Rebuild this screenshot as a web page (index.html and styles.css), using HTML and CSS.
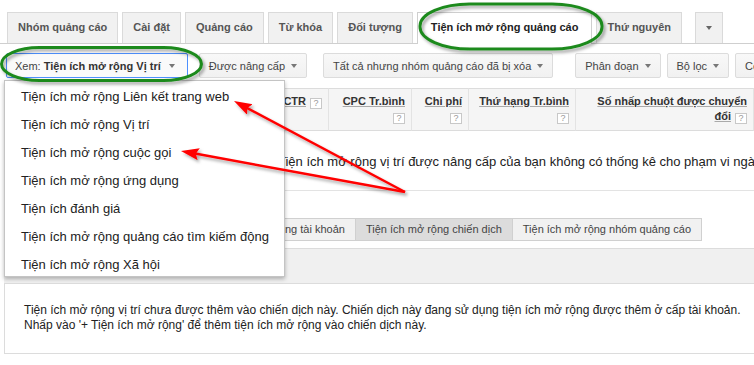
FILE: index.html
```html
<!DOCTYPE html>
<html lang="vi">
<head>
<meta charset="utf-8">
<title>Tiện ích mở rộng quảng cáo</title>
<link rel="stylesheet" href="styles.css">
</head>
<body>
<div class="page">
  <div class="tabs">
    <div class="tab">Nhóm quảng cáo</div>
    <div class="tab">Cài đặt</div>
    <div class="tab">Quảng cáo</div>
    <div class="tab">Từ khóa</div>
    <div class="tab">Đối tượng</div>
    <div class="tab active">Tiện ích mở rộng quảng cáo</div>
    <div class="tab">Thứ nguyên</div>
    <div class="tab more"><span class="caret"></span></div>
  </div>

  <div class="toolbar">
    <div class="btn focus">Xem:&nbsp;<b>Tiện ích mở rộng Vị trí</b><span class="caret"></span></div>
    <div class="btn gap">Được nâng cấp<span class="caret"></span></div>
    <div class="sep"></div>
    <div class="btn">Tất cả nhưng nhóm quảng cáo đã bị xóa<span class="caret"></span></div>
    <div class="sep"></div>
    <div class="btn">Phân đoạn<span class="caret"></span></div>
    <div class="btn">Bộ lọc<span class="caret"></span></div>
    <div class="btn">Cột<span class="caret"></span></div>
  </div>

  <div class="grid">
    <div class="th left"><span class="lbl">Tiện ích mở rộng</span></div>
    <div class="th"><span class="lbl">Nhấp chuột</span></div>
    <div class="th"><span class="lbl">Hiển thị</span></div>
    <div class="th"><div class="ln"><span class="lbl">CTR</span><span class="q">?</span></div></div>
    <div class="th"><div class="ln"><span class="lbl">CPC Tr.bình</span></div><div class="ln"><span class="q">?</span></div></div>
    <div class="th"><div class="ln"><span class="lbl">Chi phí</span></div><div class="ln"><span class="q">?</span></div></div>
    <div class="th"><div class="ln"><span class="lbl">Thứ hạng Tr.bình</span></div><div class="ln"><span class="q">?</span></div></div>
    <div class="th"><div class="ln"><span class="lbl">Số nhấp chuột được chuyển</span></div><div class="ln"><span class="lbl">đổi</span><span class="q">?</span></div></div>
    <div class="msg">Tiện ích mở rộng vị trí được nâng cấp của bạn không có thống kê cho phạm vi ngày này.</div>
  </div>

  <div class="subtabs">
    <div class="st">Tiện ích mở rộng tài khoản</div>
    <div class="st sel">Tiện ích mở rộng chiến dịch</div>
    <div class="st">Tiện ích mở rộng nhóm quảng cáo</div>
  </div>

  <div class="band"></div>

  <div class="notice">
    <p>Tiện ích mở rộng vị trí chưa được thêm vào chiến dịch này. Chiến dịch này đang sử dụng tiện ích mở rộng được thêm ở cấp tài khoản.</p>
    <p>Nhấp vào '+ Tiện ích mở rộng' để thêm tiện ích mở rộng vào chiến dịch này.</p>
  </div>

  <div class="menu">
    <div class="item">Tiện ích mở rộng Liên kết trang web</div>
    <div class="item">Tiện ích mở rộng Vị trí</div>
    <div class="item">Tiện ích mở rộng cuộc gọi</div>
    <div class="item">Tiện ích mở rộng ứng dụng</div>
    <div class="item">Tiện ích đánh giá</div>
    <div class="item">Tiện ích mở rộng quảng cáo tìm kiếm động</div>
    <div class="item">Tiện ích mở rộng Xã hội</div>
  </div>

  <svg class="annot" width="754" height="365" viewBox="0 0 754 365">
    <defs>
      <filter id="sh" x="-5%" y="-5%" width="115%" height="125%">
        <feDropShadow dx="2" dy="2.5" stdDeviation="1.5" flood-color="#000" flood-opacity="0.35"/>
      </filter>
      <marker id="ah" markerUnits="userSpaceOnUse" markerWidth="20" markerHeight="14" refX="12" refY="6" orient="auto">
        <path d="M0,0 L18,6 L0,12 L3,6 z" fill="#f00"/>
      </marker>
    </defs>
    <g filter="url(#sh)">
      <rect x="420" y="4" width="182" height="45" rx="50" ry="22" fill="none" stroke="#1f8a1f" stroke-width="3"/>
      <rect x="1.5" y="47.5" width="200" height="33" rx="38" ry="16.5" fill="none" stroke="#1f8a1f" stroke-width="3"/>
      <line x1="405" y1="192" x2="239.3" y2="103.8" stroke="#f00" stroke-width="2.5" marker-end="url(#ah)"/>
      <line x1="405" y1="192" x2="186.9" y2="152.1" stroke="#f00" stroke-width="2.5" marker-end="url(#ah)"/>
    </g>
  </svg>
</div>
</body>
</html>
```

FILE: styles.css
```css
* { box-sizing: border-box; }
html, body { margin: 0; padding: 0; overflow: hidden; }
body {
  width: 754px;
  height: 365px;
  background: #fff;
  font-family: "Liberation Sans", Arial, sans-serif;
  color: #222;
}
.page {
  position: relative;
  width: 754px;
  height: 365px;
  overflow: hidden;
}

/* top tabs */
.tabs {
  display: flex;
  align-items: flex-end;
  height: 44px;
  padding: 12px 0 0 7px;
  border-bottom: 1px solid #cfcfcf;
  gap: 4px;
}
.tab {
  height: 31px;
  padding: 0 10px;
  line-height: 29px;
  background: #f1f1f1;
  border: 1px solid #dadada;
  border-bottom: none;
  font-size: 11px;
  font-weight: bold;
  color: #555;
  white-space: nowrap;
}
.tab.active {
  height: 32px;
  margin-bottom: -1px;
  padding: 0 13px;
  background: #fff;
  color: #222;
  border-color: #cfcfcf;
}
.tab.more {
  width: 28px;
  margin-left: 9px;
  padding: 0;
  display: flex;
  align-items: center;
  justify-content: center;
}
.tab.more .caret { margin-left: 0; border-top-color: #666; }

/* toolbar */
.toolbar {
  display: flex;
  align-items: flex-start;
  height: 44px;
  padding: 9px 0 0 6px;
}
.btn {
  height: 25px;
  display: flex;
  align-items: center;
  padding: 0 9px;
  margin-right: 6px;
  border: 1px solid #dcdcdc;
  border-radius: 2px;
  background: linear-gradient(#f8f8f8, #f1f1f1);
  font-size: 11px;
  color: #444;
  white-space: nowrap;
}
.btn b { color: #333; }
.btn.focus {
  padding: 0 12px 0 8px;
  border-color: #4d90fe;
  background: #fafafa;
  color: #444;
}
.btn.focus .caret { margin-left: 8px; }
.btn.gap { margin-left: 5px; margin-right: 0; }
.caret {
  display: inline-block;
  width: 0;
  height: 0;
  margin-left: 6px;
  border-left: 3.5px solid transparent;
  border-right: 3.5px solid transparent;
  border-top: 4px solid #777;
}
.sep {
  width: 1px;
  height: 25px;
  margin: 0 8px;
  background: #e3e3e3;
}

/* stats table */
.grid {
  display: grid;
  grid-template-columns: 96px 90px 80px 59px 83px 57px 107px 178px;
  width: max-content;
  margin-left: 4px;
}
.th {
  height: 43px;
  padding: 5px 6px 0 4px;
  background: #f5f5f5;
  border-top: 1px solid #dcdcdc;
  border-bottom: 1px solid #dcdcdc;
  border-right: 1px solid #e3e3e3;
  text-align: right;
  font-size: 11px;
  font-weight: bold;
  line-height: 15px;
  color: #333;
  white-space: nowrap;
}
.th.left { text-align: left; }
.ln { height: 15px; }
.lbl { text-decoration: underline; text-decoration-color: #aaa; }
.q {
  display: inline-block;
  width: 12px;
  height: 11px;
  margin-left: 4px;
  border: 1px solid #c8c8c8;
  background: #fff;
  font-size: 9px;
  line-height: 9px;
  font-weight: normal;
  text-align: center;
  color: #999;
  vertical-align: -1px;
}
.msg {
  grid-column: 1 / -1;
  padding: 23px 0 20px 274px;
  border-bottom: 1px solid #e3e3e3;
  font-size: 13px;
  line-height: 16px;
  color: #222;
  white-space: nowrap;
  overflow: hidden;
}

/* sub tabs */
.subtabs {
  display: flex;
  margin: 27px 0 0 203px;
}
.st {
  height: 23px;
  padding: 0 10px;
  margin-right: -1px;
  border: 1px solid #d0d0d0;
  background: #f1f1f1;
  font-size: 11px;
  line-height: 21px;
  color: #444;
  white-space: nowrap;
}
.st.sel { background: #dcdcdc; }

.band {
  height: 35px;
  margin: 7px 0 0 4px;
  background: #f0f0f0;
  border-top: 1px solid #dcdcdc;
}
.notice {
  width: 760px;
  margin-left: 4px;
  padding: 19px 0 20px 19px;
  border: 1px solid #dcdcdc;
  font-size: 12px;
  line-height: 15px;
  color: #222;
  white-space: nowrap;
}
.notice p { margin: 0; }

/* dropdown menu */
.menu {
  position: absolute;
  left: 4px;
  top: 80px;
  width: 281px;
  height: 197px;
  overflow: hidden;
  padding-top: 2px;
  background: #fff;
  border: 1px solid #c4c4c4;
  box-shadow: 0 2px 4px rgba(0, 0, 0, 0.28);
}
.item {
  height: 28px;
  line-height: 28px;
  padding-left: 16px;
  font-size: 13px;
  color: #222;
  white-space: nowrap;
}

/* annotations */
.annot {
  position: absolute;
  left: 0;
  top: 0;
  pointer-events: none;
}
```
